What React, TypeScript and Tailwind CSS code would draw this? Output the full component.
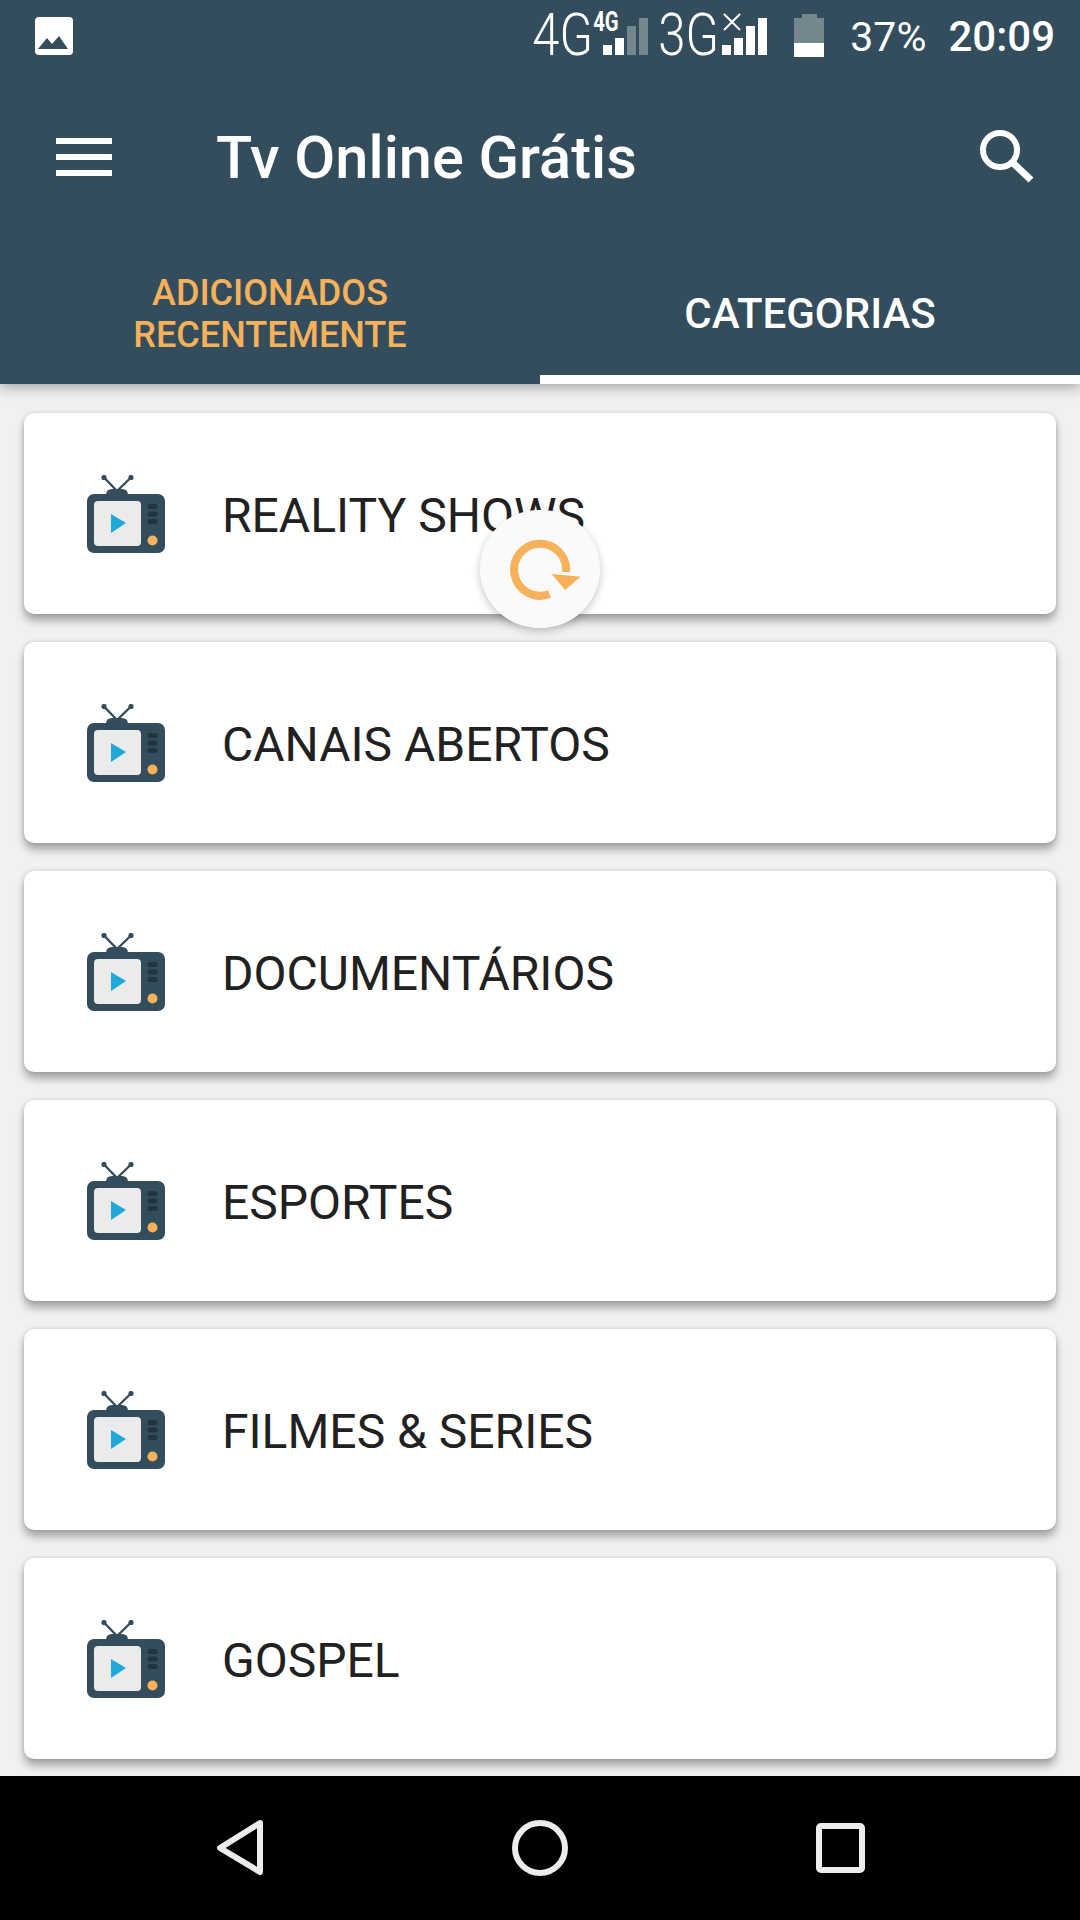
const categories = [
  "REALITY SHOWS",
  "CANAIS ABERTOS",
  "DOCUMENTÁRIOS",
  "ESPORTES",
  "FILMES & SERIES",
  "GOSPEL",
];

// lit = how many of the 4 bars are white
function Signal({ lit }: { lit: number }) {
  const heights = ["h-[10px]", "h-[17px]", "h-[29px]", "h-[37px]"];
  return (
    <div className="flex items-end gap-[3px] h-[37px]">
      {heights.map((h, i) => (
        <div key={h} className={`w-[9px] ${h} ${i < lit ? "bg-white" : "bg-[#74878f]"}`} />
      ))}
    </div>
  );
}

function NetLabel({ text }: { text: string }) {
  return (
    <div className="w-[58px] h-[42px] flex items-center justify-center">
      <span className="text-[59px] leading-none font-light text-white scale-x-[0.83] inline-block">{text}</span>
    </div>
  );
}

function StatusBar() {
  return (
    <div className="h-[70px] flex items-start pl-[35px] pr-[25px]">
      <svg className="mt-[17px]" width="38" height="38" viewBox="0 0 38 38">
        <rect width="38" height="38" rx="4" fill="#fff" />
        <path d="M3 32 L12 21 L17 27 L24 19 L33 32 Z" fill="#334d5c" />
      </svg>
      <div className="ml-auto flex items-start">
        <div className="mt-[13px]">
          <NetLabel text="4G" />
        </div>
        <div className="relative w-[48px] ml-[12px] mt-[18px]">
          <Signal lit={2} />
          <span className="absolute left-[-14px] top-[-8px] text-[27px] leading-[24px] font-bold text-white scale-x-[0.75] inline-block">4G</span>
        </div>
        <div className="ml-[8px] mt-[13px]">
          <NetLabel text="3G" />
        </div>
        <div className="relative w-[48px] ml-[5px] mt-[18px]">
          <Signal lit={4} />
          <svg className="absolute left-0 top-[-5px]" width="20" height="18" viewBox="0 0 20 18">
            <path d="M2 1 L18 17 M18 1 L2 17" stroke="#fff" strokeWidth="2" />
          </svg>
        </div>
        <div className="ml-[24px] mt-[14px] flex flex-col items-center w-[30px]">
          <div className="w-[15px] h-[4px] bg-[#74878f]" />
          <div className="w-[30px] h-[25px] bg-[#74878f]" />
          <div className="w-[30px] h-[14px] bg-white" />
        </div>
        <span className="ml-[26px] mt-[15px] text-[41px] leading-[44px] font-normal text-white">37%</span>
        <span className="ml-[22px] mt-[15px] text-[42px] leading-[44px] font-medium text-white">20:09</span>
      </div>
    </div>
  );
}

function TvIcon() {
  return (
    <svg width="78" height="78" viewBox="27 15 78 78" className="shrink-0">
      <path d="M57 31 L44 17.5 M57 31 L71 17.5" stroke="#334d5c" strokeWidth="2.4" />
      <circle cx="44" cy="17.5" r="2.6" fill="#334d5c" />
      <circle cx="71" cy="17.5" r="2.6" fill="#334d5c" />
      <path d="M46 35 Q46 29 52 29 L62 29 Q68 29 68 35 Z" fill="#334d5c" />
      <rect x="27" y="34" width="78" height="59" rx="7" fill="#334d5c" />
      <rect x="34" y="41" width="47" height="45" rx="4" fill="#ebebeb" />
      <path d="M51 54 L66 63 L51 73 Z" fill="#1fa8d8" />
      <rect x="87.5" y="44" width="10" height="5" rx="2.5" fill="#22343f" />
      <rect x="87.5" y="51.5" width="10" height="5" rx="2.5" fill="#22343f" />
      <rect x="87.5" y="59" width="10" height="5" rx="2.5" fill="#22343f" />
      <circle cx="92.5" cy="80.5" r="5" fill="#f6b15a" />
    </svg>
  );
}

export default function App() {
  return (
    <div
      className="relative h-[1920px] w-[1080px] overflow-hidden flex flex-col bg-[#f1f1f1]"
      style={{ fontFamily: "Roboto, sans-serif" }}
    >
      <header className="relative z-10 h-[384px] shrink-0 bg-[#334d5c] shadow-[0_4px_12px_rgba(0,0,0,0.3)]">
        <StatusBar />
        <div className="h-[174px] flex items-center pl-[56px] pr-[45px]">
          <div className="w-[56px] h-[38px] flex flex-col justify-between">
            <div className="h-[6px] bg-white" />
            <div className="h-[6px] bg-white" />
            <div className="h-[6px] bg-white" />
          </div>
          <h1 className="ml-[104px] mt-[4px] text-[59.5px] leading-none font-medium text-white">Tv Online Grátis</h1>
          <svg className="ml-auto" width="56" height="56" viewBox="0 0 56 56">
            <circle cx="21" cy="21" r="17" fill="none" stroke="#fff" strokeWidth="6" />
            <path d="M33 33 L52 51" stroke="#fff" strokeWidth="7" />
          </svg>
        </div>
        <div className="grid grid-cols-2 h-[140px]">
          <div className="flex items-center justify-center pt-[9px] border-b-[9px] border-transparent text-center text-[36px] leading-[42px] font-medium text-[#f6b15a]">
            ADICIONADOS
            <br />
            RECENTEMENTE
          </div>
          <div className="flex items-center justify-center pt-[7px] border-b-[9px] border-white text-[42px] font-medium text-white">
            CATEGORIAS
          </div>
        </div>
      </header>

      <main className="flex-1 flex flex-col gap-[28px] px-6 pt-[29px]">
        {categories.map((name) => (
          <div
            key={name}
            className="h-[201px] shrink-0 flex items-center pl-[63px] rounded-[10px] bg-white shadow-[0_7px_8px_rgba(0,0,0,0.3),0_0_5px_rgba(0,0,0,0.14)]"
          >
            <TvIcon />
            <span className="ml-[57px] pt-[4px] text-[48px] text-[#212121]">{name}</span>
          </div>
        ))}
      </main>

      {/* pull-to-refresh spinner, sits over the first card */}
      <div className="absolute z-20 left-[480px] top-[510px] w-[120px] h-[118px] rounded-full bg-[#fafafa] shadow-[0_3px_8px_rgba(0,0,0,0.22)]">
        <svg width="120" height="118" viewBox="20 20 120 118">
          <path d="M89.5 104 A 26 26 0 1 1 106 82" fill="none" stroke="#f6b15a" strokeWidth="8" />
          <path d="M91.7 84 L120.7 86.7 L105 100 Z" fill="#f6b15a" />
        </svg>
      </div>

      <nav className="relative z-10 h-[144px] shrink-0 bg-black flex items-center">
        <svg width="1080" height="144" viewBox="0 0 1080 144">
          <path d="M260 47 L220 72 L260 96 Z" fill="none" stroke="#ececec" strokeWidth="6" strokeLinejoin="round" />
          <circle cx="540" cy="72" r="25" fill="none" stroke="#ececec" strokeWidth="6" />
          <rect x="819" y="50" width="43" height="44" rx="2" fill="none" stroke="#ececec" strokeWidth="6" />
        </svg>
      </nav>
    </div>
  );
}
